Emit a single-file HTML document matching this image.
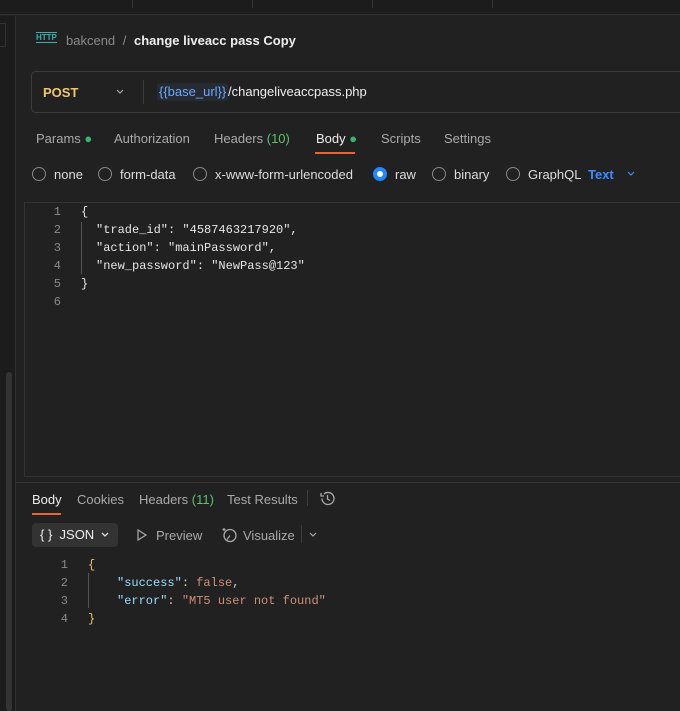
<!DOCTYPE html>
<html><head><style>
*{margin:0;padding:0;box-sizing:border-box}
body{width:680px;height:711px;background:#212121;font-family:"Liberation Sans",sans-serif;color:#ccc;position:relative;overflow:hidden;font-size:13px}
.a{position:absolute;white-space:nowrap}
.mono{font-family:"Liberation Mono",monospace;font-size:12px}
.ln{color:#8a8a8a;text-align:right;width:16px}
.k{color:#9cdcfe}
.s{color:#ce9178}
.w{color:#e6e6e6}
.radio{position:absolute;width:14px;height:14px;border:1px solid #888;border-radius:50%}
</style></head><body>
<div class="a" style="left:0;top:0;width:680px;height:15px;background:#1c1c1c;border-bottom:1px solid #303030"></div>
<div class="a" style="left:132px;top:0;width:1px;height:8px;background:#333"></div>
<div class="a" style="left:252px;top:0;width:1px;height:8px;background:#333"></div>
<div class="a" style="left:372px;top:0;width:1px;height:8px;background:#333"></div>
<div class="a" style="left:492px;top:0;width:1px;height:8px;background:#333"></div>
<div class="a" style="left:0;top:16px;width:16px;height:695px;background:#1c1c1c;border-right:1px solid #303030"></div>
<div class="a" style="left:0;top:23px;width:6px;height:24px;border:1px solid #333;border-left:none"></div>
<div class="a" style="left:6px;top:372px;width:6px;height:339px;background:#333;border-radius:3px"></div>

<div class="a" style="left:36px;top:32px;color:#3ab0b0;font-size:8px;font-weight:bold;border-top:1px solid #3ab0b0;border-bottom:1px solid #3ab0b0;line-height:9px">HTTP</div>
<div class="a" style="left:66px;top:33px;font-size:13px;color:#8a8a8a">bakcend <span style="margin:0 4px">/</span> <b style="color:#eee">change liveacc pass Copy</b></div>

<div class="a" style="left:31px;top:71px;width:660px;height:42px;border:1px solid #3c3c3c;border-radius:5px"></div>
<div class="a" style="left:43px;top:85px;color:#f0c674;font-weight:bold;font-size:13px">POST</div>
<svg class="a" style="left:115px;top:88px" width="10" height="8"><path d="M2 2l3 3 3-3" stroke="#aaa" fill="none" stroke-width="1.2"/></svg>
<div class="a" style="left:143px;top:80px;width:1px;height:24px;background:#3c3c3c"></div>
<div class="a" style="left:157px;top:83px;height:18px;padding:0 2px;background:#262a33;border-radius:3px;color:#6ea8ff;font-size:13px;line-height:18px">{{base_url}}</div>
<div class="a" style="left:228px;top:84px;color:#eee;font-size:13px">/changeliveaccpass.php</div>

<div class="a" style="top:131px;left:36px;color:#aaa">Params <span style="color:#3bb36b">●</span></div>
<div class="a" style="top:131px;left:114px;color:#aaa">Authorization</div>
<div class="a" style="top:131px;left:214px;color:#aaa">Headers <span style="color:#5ec26a">(10)</span></div>
<div class="a" style="top:131px;left:316px;color:#eee">Body <span style="color:#3bb36b">●</span></div>
<div class="a" style="left:315px;top:152px;width:40px;height:2px;background:#e8653a"></div>
<div class="a" style="top:131px;left:381px;color:#aaa">Scripts</div>
<div class="a" style="top:131px;left:444px;color:#aaa">Settings</div>

<div class="radio" style="left:32px;top:167px"></div><div class="a" style="left:54px;top:167px;color:#ddd">none</div>
<div class="radio" style="left:98px;top:167px"></div><div class="a" style="left:120px;top:167px;color:#ddd">form-data</div>
<div class="radio" style="left:193px;top:167px"></div><div class="a" style="left:215px;top:167px;color:#ddd">x-www-form-urlencoded</div>
<div class="radio" style="left:373px;top:167px;border:4px solid #1e88ff;background:#fff"></div><div class="a" style="left:395px;top:167px;color:#ddd">raw</div>
<div class="radio" style="left:432px;top:167px"></div><div class="a" style="left:454px;top:167px;color:#ddd">binary</div>
<div class="radio" style="left:506px;top:167px"></div><div class="a" style="left:528px;top:167px;color:#ddd">GraphQL</div>
<div class="a" style="left:588px;top:167px;color:#3d8bff;font-weight:bold">Text</div>
<svg class="a" style="left:626px;top:170px" width="10" height="8"><path d="M2 2l3 3 3-3" stroke="#3d8bff" fill="none" stroke-width="1.2"/></svg>

<div class="a" style="left:24px;top:202px;width:670px;height:275px;border:1px solid #333;border-right:none"></div>
<div class="a" style="left:81px;top:222px;width:1px;height:52px;background:#555"></div>
<div class="mono">
<div class="a ln" style="left:45px;top:205px">1</div><div class="a w" style="left:81px;top:205px">{</div>
<div class="a ln" style="left:45px;top:223px">2</div><div class="a w" style="left:96px;top:223px">"trade_id": "4587463217920",</div>
<div class="a ln" style="left:45px;top:241px">3</div><div class="a w" style="left:96px;top:241px">"action": "mainPassword",</div>
<div class="a ln" style="left:45px;top:259px">4</div><div class="a w" style="left:96px;top:259px">"new_password": "NewPass@123"</div>
<div class="a ln" style="left:45px;top:277px">5</div><div class="a w" style="left:81px;top:277px">}</div>
<div class="a ln" style="left:45px;top:295px">6</div>
</div>
<div class="a" style="left:16px;top:482px;width:664px;height:1px;background:#333"></div>

<div class="a" style="top:492px;left:32px;color:#eee">Body</div>
<div class="a" style="left:32px;top:513px;width:29px;height:2px;background:#e8653a"></div>
<div class="a" style="top:492px;left:77px;color:#aaa">Cookies</div>
<div class="a" style="top:492px;left:139px;color:#aaa">Headers <span style="color:#5ec26a">(11)</span></div>
<div class="a" style="top:492px;left:227px;color:#aaa">Test Results</div>
<div class="a" style="left:307px;top:490px;width:1px;height:16px;background:#3c3c3c"></div>
<svg class="a" style="left:319px;top:490px" width="17" height="17" viewBox="0 0 17 17"><path d="M3 8.5a6 6 0 1 0 2-4.5M2 3v3h3M8.5 5v4l2.5 1.5" stroke="#aaa" fill="none" stroke-width="1.3"/></svg>

<div class="a" style="left:32px;top:523px;width:86px;height:24px;background:#333;border-radius:4px"></div>
<div class="a" style="left:40px;top:527px;color:#eee;font-size:13px">{ }&nbsp;&nbsp;JSON</div>
<svg class="a" style="left:100px;top:531px" width="10" height="8"><path d="M2 2l3 3 3-3" stroke="#ddd" fill="none" stroke-width="1.3"/></svg>
<svg class="a" style="left:136px;top:528px" width="12" height="14"><path d="M2 2l8 5-8 5z" stroke="#aaa" fill="none" stroke-width="1.2"/></svg>
<div class="a" style="left:156px;top:528px;color:#aaa">Preview</div>
<svg class="a" style="left:221px;top:526px" width="17" height="17"><circle cx="9" cy="9.5" r="6" stroke="#aaa" fill="none" stroke-width="1.3"/><path d="M9 9.5l-3 4M3 2v3M1.5 3.5h3" stroke="#aaa" stroke-width="1.2"/></svg>
<div class="a" style="left:243px;top:528px;color:#aaa">Visualize</div>
<div class="a" style="left:301px;top:525px;width:1px;height:18px;background:#3c3c3c"></div>
<svg class="a" style="left:308px;top:531px" width="10" height="8"><path d="M2 2l3 3 3-3" stroke="#aaa" fill="none" stroke-width="1.2"/></svg>

<div class="a" style="left:88px;top:573px;width:1px;height:35px;background:#555"></div>
<div class="mono">
<div class="a ln" style="left:52px;top:558px">1</div><div class="a" style="left:88px;top:558px;color:#e8c070">{</div>
<div class="a ln" style="left:52px;top:576px">2</div><div class="a" style="left:117px;top:576px"><span class="k">"success"</span>: <span class="s">false</span>,</div>
<div class="a ln" style="left:52px;top:594px">3</div><div class="a" style="left:117px;top:594px"><span class="k">"error"</span>: <span class="s">"MT5 user not found"</span></div>
<div class="a ln" style="left:52px;top:612px">4</div><div class="a" style="left:88px;top:612px;color:#e8c070">}</div>
</div>
</body></html>
